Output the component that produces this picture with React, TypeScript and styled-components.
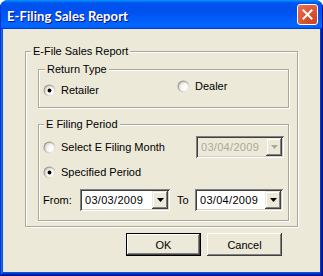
import React from "react";
import styled, { createGlobalStyle } from "styled-components";

const Global = createGlobalStyle`
  html, body { margin: 0; padding: 0; background: #fff; }
  body { font-family: "Liberation Sans", Arial, sans-serif; font-size: 11px; }
`;

const Window = styled.div`
  width: 323px;
  height: 276px;
  display: flex;
  flex-direction: column;
  border-radius: 8px 8px 0 0;
  overflow: hidden;
  background: #0054e3;
`;

const TitleBar = styled.div`
  height: 29px;
  flex: none;
  box-sizing: border-box;
  display: flex;
  align-items: center;
  justify-content: space-between;
  padding: 2px 5px 0 7px;
  background: linear-gradient(
    180deg,
    #0997ff 0%,
    #0053ee 10%,
    #0050ee 40%,
    #0066ff 86%,
    #0066ff 92%,
    #005bff 95%,
    #003dd7 97%,
    #003dd7 100%
  );
  box-shadow: inset 1px 0 #0831d9, inset -1px 0 #00138c;
`;

const Title = styled.span`
  font-family: Lato, "Liberation Sans", sans-serif;
  font-weight: 700;
  font-size: 13px;
  color: #fff;
  text-shadow: 1px 1px #0f1089;
  letter-spacing: 0.1px;
`;

const CloseButton = styled.div`
  width: 21px;
  height: 21px;
  box-sizing: border-box;
  border: 1px solid #fff;
  border-radius: 3px;
  background: radial-gradient(circle at 80% 85%, #cc4622 0%, #d9522c 40%, #e8735a 100%);
  display: flex;
  align-items: center;
  justify-content: center;
  margin-bottom: 2px;
`;

const Frame = styled.div`
  flex: 1;
  display: flex;
  padding: 0 3px 4px 3px;
  background: #0054e3;
  box-shadow: inset -1px -1px #00138c, inset 1px 0 #0831d9, inset -2px -2px #001ea0,
    inset 2px 0 #166aee, inset -3px -3px #003bda, inset 3px 0 #0855dd;
`;

const Client = styled.div`
  flex: 1;
  background: #ece9d8;
  display: flex;
  flex-direction: column;
  color: #000;
`;

const Group = styled.fieldset<{ $w: number; $h: number; $mt: number; $ml: number }>`
  box-sizing: border-box;
  width: ${(p) => p.$w}px;
  height: ${(p) => p.$h}px;
  margin: ${(p) => p.$mt}px 0 0 ${(p) => p.$ml}px;
  padding: 0;
  border: 1px solid #aca899;
  box-shadow: 1px 1px 0 #ffffff, inset 1px 1px 0 #ffffff;
  min-inline-size: 0;
  display: flex;
  flex-direction: column;
`;

const Legend = styled.legend<{ $ml: number }>`
  font-size: 11px;
  line-height: 13px;
  padding: 0 2px;
  margin-left: ${(p) => p.$ml}px;
  background: #ece9d8;
  color: #000;
`;

const ReturnRow = styled.div`
  display: grid;
  grid-template-columns: 134px auto;
  padding-left: 4px;
  align-items: start;
`;

const RadioItem = styled.div<{ $mt?: number }>`
  display: flex;
  align-items: center;
  gap: 5px;
  margin-top: ${(p) => p.$mt ?? 0}px;
  height: 13px;
  line-height: 13px;
  white-space: nowrap;
`;

const PeriodRow = styled.div<{ $mt: number }>`
  display: flex;
  align-items: center;
  height: 22px;
  margin-top: ${(p) => p.$mt}px;
  padding: 0 4px 0 4px;
`;

const Spacer = styled.div`
  flex: 1;
`;

const FieldLabel = styled.span<{ $w: number; $ml?: number }>`
  width: ${(p) => p.$w}px;
  margin-left: ${(p) => p.$ml ?? 0}px;
  flex: none;
  line-height: 13px;
`;

const Combo = styled.div<{ $w: number; $disabled?: boolean }>`
  box-sizing: border-box;
  width: ${(p) => p.$w}px;
  height: 22px;
  flex: none;
  display: flex;
  align-items: stretch;
  padding: 2px;
  background: ${(p) => (p.$disabled ? "#ece9d8" : "#fff")};
  box-shadow: inset 1px 1px #808080, inset -1px -1px #ffffff, inset 2px 2px #404040,
    inset -2px -2px #d4d0c8;
`;

const ComboText = styled.span<{ $disabled?: boolean }>`
  flex: 1;
  padding-left: 3px;
  display: flex;
  align-items: center;
  font-size: 11px;
  letter-spacing: 0.3px;
  color: ${(p) => (p.$disabled ? "#aca899" : "#000")};
`;

const DropButton = styled.div`
  width: 16px;
  flex: none;
  background: #ece9d8;
  display: flex;
  align-items: center;
  justify-content: center;
  box-shadow: inset -1px -1px #404040, inset 1px 1px #ece9d8, inset -2px -2px #808080,
    inset 2px 2px #ffffff;
`;

const ButtonRow = styled.div`
  display: flex;
  justify-content: flex-end;
  gap: 6px;
  margin-top: 6px;
  padding-right: 38px;
`;

const Button = styled.div<{ $default?: boolean }>`
  box-sizing: border-box;
  width: 75px;
  height: 23px;
  display: flex;
  align-items: center;
  justify-content: center;
  background: #ece9d8;
  font-size: 11px;
  border: ${(p) => (p.$default ? "1px solid #000" : "none")};
  box-shadow: ${(p) =>
    p.$default
      ? "inset -1px -1px #404040, inset 1px 1px #ffffff, inset -2px -2px #808080"
      : "inset -1px -1px #404040, inset 1px 1px #ffffff, inset -2px -2px #808080, inset 2px 2px #ece9d8"};
`;

const Radio = ({ checked }: { checked?: boolean }) => (
  <svg width="13" height="13" viewBox="0 0 13 13">
    <defs>
      <linearGradient id="rg" x1="0" y1="0" x2="1" y2="1">
        <stop offset="0" stopColor="#7a7a7a" />
        <stop offset="0.5" stopColor="#c0beb4" />
        <stop offset="1" stopColor="#ffffff" />
      </linearGradient>
      <radialGradient id="rf" cx="0.65" cy="0.65" r="0.6">
        <stop offset="0" stopColor="#ffffff" />
        <stop offset="0.7" stopColor="#f6f5f1" />
        <stop offset="1" stopColor="#dcdad2" />
      </radialGradient>
    </defs>
    <circle cx="6.5" cy="6.5" r="6" fill="url(#rg)" />
    <circle cx="6.5" cy="6.5" r="4.8" fill="url(#rf)" />
    {checked && <circle cx="6.5" cy="6.5" r="1.9" fill="#000" />}
  </svg>
);

const Arrow = ({ color }: { color: string }) => (
  <svg width="7" height="4" viewBox="0 0 7 4">
    <path d="M0 0h7L3.5 4z" fill={color} />
  </svg>
);

const DateCombo = ({ w, value, disabled }: { w: number; value: string; disabled?: boolean }) => (
  <Combo $w={w} $disabled={disabled}>
    <ComboText $disabled={disabled}>{value}</ComboText>
    <DropButton>
      <Arrow color={disabled ? "#aca899" : "#000"} />
    </DropButton>
  </Combo>
);

export default function App() {
  return (
    <>
      <Global />
      <Window>
        <TitleBar>
          <Title>E-Filing Sales Report</Title>
          <CloseButton>
            <svg width="11" height="11" viewBox="0 0 11 11">
              <path d="M1.5 1.5l8 8M9.5 1.5l-8 8" stroke="#fff" strokeWidth="2" strokeLinecap="square" />
            </svg>
          </CloseButton>
        </TitleBar>
        <Frame>
          <Client>
            <Group $w={273} $h={182} $mt={16} $ml={22}>
              <Legend $ml={5}>E-File Sales Report</Legend>
              <Group $w={251} $h={45} $mt={5} $ml={12}>
                <Legend $ml={6}>Return Type</Legend>
                <ReturnRow>
                  <RadioItem $mt={8}>
                    <Radio checked />
                    <span>Retailer</span>
                  </RadioItem>
                  <RadioItem $mt={4}>
                    <Radio />
                    <span>Dealer</span>
                  </RadioItem>
                </ReturnRow>
              </Group>
              <Group $w={251} $h={103} $mt={10} $ml={12}>
                <Legend $ml={5}>E Filing Period</Legend>
                <PeriodRow $mt={5}>
                  <RadioItem>
                    <Radio />
                    <span>Select E Filing Month</span>
                  </RadioItem>
                  <Spacer />
                  <DateCombo w={88} value="03/04/2009" disabled />
                </PeriodRow>
                <PeriodRow $mt={3}>
                  <RadioItem>
                    <Radio checked />
                    <span>Specified Period</span>
                  </RadioItem>
                </PeriodRow>
                <PeriodRow $mt={6}>
                  <FieldLabel $w={37}>From:</FieldLabel>
                  <DateCombo w={90} value="03/03/2009" />
                  <FieldLabel $w={18} $ml={7}>To</FieldLabel>
                  <DateCombo w={88} value="03/04/2009" />
                </PeriodRow>
              </Group>
            </Group>
            <ButtonRow>
              <Button $default>OK</Button>
              <Button>Cancel</Button>
            </ButtonRow>
          </Client>
        </Frame>
      </Window>
    </>
  );
}
